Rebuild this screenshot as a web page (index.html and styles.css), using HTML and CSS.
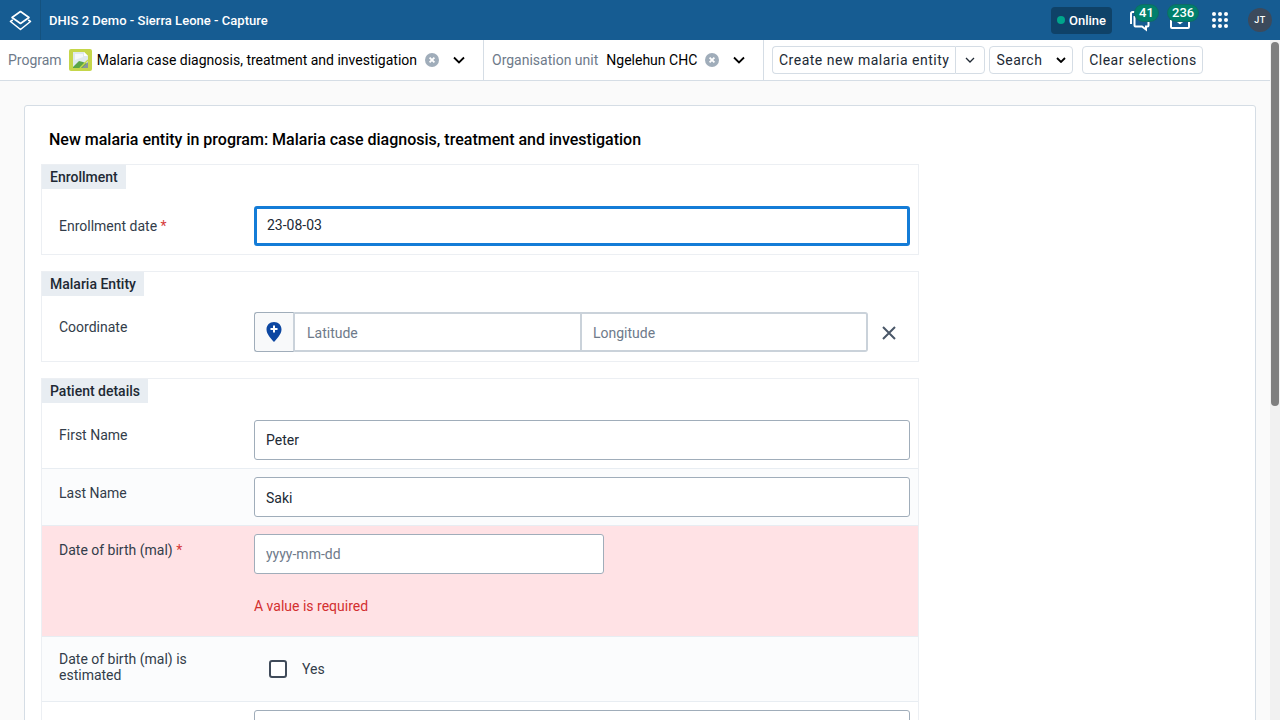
FILE: index.html
```html
<!DOCTYPE html>
<html>
<head>
    <title>DHIS 2 Demo - Sierra Leone - Capture</title>
    <link rel="stylesheet" href="styles.css">
</head>
<body>
    <header class="header-bar">
        <div class="logo-box">
            <svg width="23" height="21" viewBox="0 0 23 21" fill="none" stroke="#fff" stroke-width="1.6" stroke-linejoin="round">
                <path d="M11.500 1.500L20 7.500 11.500 13.500 3 7.500Z"/>
                <path d="M3.800 10L1.500 11.500 11.500 19.500 21.500 11.500 19.200 10"/>
            </svg>
        </div>
        <span class="app-title">DHIS 2 Demo - Sierra Leone - Capture</span>
        <div class="header-right">
            <div class="online-pill"><span class="online-dot"></span>Online</div>
            <div class="header-icon icon-messages">
                <svg width="24" height="24" viewBox="0 0 24 24" fill="none" stroke="#fff" stroke-width="2">
                    <path d="M10 4H4.500A1.500 1.500 0 0 0 3 5.500V16"/>
                    <path d="M6.500 8v9.500a1 1 0 0 0 1 1H14l4 3v-3h1.500a1 1 0 0 0 1-1V14"/>
                </svg>
                <span class="count-badge badge-messages">41</span>
            </div>
            <div class="header-icon icon-inbox">
                <svg width="24" height="24" viewBox="0 0 24 24" fill="none" stroke="#fff" stroke-width="2">
                    <path d="M3 6v13a1 1 0 0 0 1 1h16a1 1 0 0 0 1-1V6"/>
                    <path d="M9 13.500h6l-3 2.500z" fill="#fff" stroke-width="1"/>
                </svg>
                <span class="count-badge badge-inbox">236</span>
            </div>
            <div class="apps-grid">
                <span></span><span></span><span></span>
                <span></span><span></span><span></span>
                <span></span><span></span><span></span>
            </div>
            <div class="avatar">JT</div>
        </div>
    </header>

    <div class="selection-bar">
        <div class="selector selector-program">
            <span class="selector-label">Program</span>
            <svg class="program-icon" width="23" height="22" viewBox="0 0 23 22">
                <rect width="23" height="22" rx="2" fill="#c5d64a"/>
                <path d="M4 3h11l4 4v12H4z" fill="#dfe9ee"/>
                <path d="M6 5h8v3l-8 3z" fill="#f4f8fa"/>
                <path d="M4 18l6-6 4 1 5 2v4H4z" fill="#5aa646"/>
                <path d="M15 3v4h4z" fill="#fff"/>
                <path d="M13 19l6-6v6z" fill="#8a949e"/>
                <path d="M11 19l8-8" stroke="#c5d64a" stroke-width="1.500"/>
            </svg>
            <span class="selector-value">Malaria case diagnosis, treatment and investigation</span>
            <svg class="clear-icon" width="14" height="14" viewBox="0 0 14 14">
                <circle cx="7" cy="7" r="7" fill="#a0adba"/>
                <path d="M4.600 4.600l4.800 4.800M9.400 4.600l-4.800 4.800" stroke="#fff" stroke-width="1.800"/>
            </svg>
            <svg class="chevron" width="12" height="8" viewBox="0 0 12 8" fill="none" stroke="#000" stroke-width="1.800">
                <path d="M1 1.500l5 5 5-5"/>
            </svg>
        </div>
        <div class="selector selector-orgunit">
            <span class="selector-label">Organisation unit</span>
            <span class="selector-value">Ngelehun CHC</span>
            <svg class="clear-icon" width="14" height="14" viewBox="0 0 14 14">
                <circle cx="7" cy="7" r="7" fill="#a0adba"/>
                <path d="M4.600 4.600l4.800 4.800M9.400 4.600l-4.800 4.800" stroke="#fff" stroke-width="1.800"/>
            </svg>
            <svg class="chevron" width="12" height="8" viewBox="0 0 12 8" fill="none" stroke="#000" stroke-width="1.800">
                <path d="M1 1.500l5 5 5-5"/>
            </svg>
        </div>
        <div class="action-buttons">
            <div class="split-button">
                <button class="btn btn-main">Create new malaria entity</button>
                <button class="btn btn-arrow">
                    <svg width="10" height="6" viewBox="0 0 10 6" fill="none" stroke="#212934" stroke-width="1.300"><path d="M1 1l4 4 4-4"/></svg>
                </button>
            </div>
            <button class="btn btn-search">Search
                <svg width="10" height="6" viewBox="0 0 10 6" fill="none" stroke="#000" stroke-width="1.800"><path d="M1 1l4 4 4-4"/></svg>
            </button>
            <button class="btn btn-clear">Clear selections</button>
        </div>
    </div>

    <main class="page-body">
        <div class="form-card">
            <h1 class="form-title">New malaria entity in program: Malaria case diagnosis, treatment and investigation</h1>

            <section class="form-section">
                <div class="section-tab">Enrollment</div>
                <div class="field-row row-enrollment">
                    <label class="field-label">Enrollment date <span class="req">*</span></label>
                    <div class="field-input">
                        <input class="text-input input-focus" type="text" value="23-08-03">
                    </div>
                </div>
            </section>

            <section class="form-section">
                <div class="section-tab">Malaria Entity</div>
                <div class="field-row row-coordinate">
                    <label class="field-label">Coordinate</label>
                    <div class="coord-group">
                        <button class="pin-button">
                            <svg width="16" height="20" viewBox="0 0 16 20">
                                <path d="M8 0C3.600 0 .500 3.200 .500 7.400 .500 12 5 16.500 8 20c3-3.500 7.500-8 7.500-12.600C15.500 3.200 12.400 0 8 0z" fill="#0d47a1"/>
                                <path d="M8 3.500v7M4.500 7h7" stroke="#fff" stroke-width="2"/>
                            </svg>
                        </button>
                        <input class="coord-input" type="text" placeholder="Latitude">
                        <input class="coord-input coord-last" type="text" placeholder="Longitude">
                        <svg class="coord-clear" width="16" height="16" viewBox="0 0 16 16" fill="none" stroke="#4a5768" stroke-width="2">
                            <path d="M2 2l12 12M14 2L2 14"/>
                        </svg>
                    </div>
                </div>
            </section>

            <section class="form-section">
                <div class="section-tab">Patient details</div>
                <div class="field-row row-first">
                    <label class="field-label">First Name</label>
                    <div class="field-input"><input class="text-input" type="text" value="Peter"></div>
                </div>
                <div class="field-row row-last">
                    <label class="field-label">Last Name</label>
                    <div class="field-input"><input class="text-input" type="text" value="Saki"></div>
                </div>
                <div class="field-row row-error">
                    <label class="field-label">Date of birth (mal) <span class="req">*</span></label>
                    <div class="field-input">
                        <input class="text-input input-date" type="text" placeholder="yyyy-mm-dd">
                        <div class="error-text">A value is required</div>
                    </div>
                </div>
                <div class="field-row row-estimated">
                    <label class="field-label">Date of birth (mal) is estimated</label>
                    <div class="check-wrap">
                        <span class="checkbox"></span>
                        <span class="check-text">Yes</span>
                    </div>
                </div>
                <div class="field-row row-next">
                    <label class="field-label"></label>
                    <div class="field-input"><input class="text-input" type="text"></div>
                </div>
            </section>
        </div>
    </main>
</body>
</html>
```

FILE: styles.css
```css
/* Capture app layout */
html,
body {
    margin: 0;
    height: 100%;
    overflow: hidden;
}

body {
    display: flex;
    flex-direction: column;
    font-family: 'Roboto', sans-serif;
    font-size: 14px;
    color: #212934;
    background-color: #FAFAFA;
    padding-right: 10px;
    box-sizing: border-box;
    position: relative;
}

/* Page scrollbar */
body::before {
    content: "";
    position: absolute;
    top: 40px;
    right: 0;
    width: 10px;
    height: 680px;
    background-color: #F1F1F1;
}

body::after {
    content: "";
    position: absolute;
    top: 42px;
    right: 1px;
    width: 8px;
    height: 364px;
    border-radius: 4px;
    background-color: #7F7F7F;
}

/* Header */
.header-bar {
    display: flex;
    flex: none;
    align-items: center;
    height: 40px;
    margin-right: -10px;
    background-color: #165C92;
    color: #FFFFFF;
}

.logo-box {
    display: flex;
    align-items: center;
    justify-content: center;
    width: 41px;
    height: 40px;
    border-right: 1px solid #14527F;
    box-sizing: border-box;
}

.app-title {
    margin-left: 8px;
    font-size: 13px;
    font-weight: 500;
    letter-spacing: 0.03px;
}

.header-right {
    display: flex;
    align-items: center;
    margin-left: auto;
    height: 40px;
}

.online-pill {
    display: flex;
    align-items: center;
    height: 27px;
    padding: 0 6px;
    border-radius: 4px;
    background-color: #0F4268;
    font-size: 13px;
    font-weight: 500;
}

.online-dot {
    width: 8px;
    height: 8px;
    margin-right: 4px;
    border-radius: 50%;
    background-color: #00A58B;
}

.header-icon {
    position: relative;
    width: 24px;
    height: 24px;
}

.icon-messages {
    margin-left: 16px;
}

.icon-inbox {
    margin-left: 16px;
}

.count-badge {
    position: absolute;
    top: -3px;
    display: block;
    height: 16px;
    line-height: 16px;
    padding: 0 4px;
    border-radius: 8px;
    background-color: #00806C;
    box-shadow: 0 0 0 1px #0F6B66;
    font-size: 13px;
    font-weight: 500;
}

.badge-messages {
    left: 7px;
}

.badge-inbox {
    left: 0;
}

.apps-grid {
    display: grid;
    grid-template-columns: repeat(3, 4px);
    gap: 2px;
    margin-left: 20px;
}

.apps-grid span {
    width: 4px;
    height: 4px;
    border-radius: 50%;
    background-color: #FFFFFF;
}

.avatar {
    width: 24px;
    height: 24px;
    margin: 0 8px 0 20px;
    line-height: 24px;
    text-align: center;
    border-radius: 50%;
    background-color: #3C4A5C;
    font-size: 9px;
    font-weight: 500;
    letter-spacing: 0.5px;
}

/* Selection bar */
.selection-bar {
    display: flex;
    flex: none;
    height: 41px;
    box-sizing: border-box;
    border-bottom: 1px solid #D5DDE5;
    background-color: #FFFFFF;
}

.selector {
    display: flex;
    align-items: center;
    box-sizing: border-box;
    height: 40px;
    padding-left: 8px;
    border-right: 1px solid #D5DDE5;
}

.selector-program {
    width: 484px;
}

.selector-orgunit {
    width: 280px;
}

.selector-label {
    color: #6E7A8A;
}

.selector-value {
    color: #000000;
}

.program-icon {
    margin: 0 5px 0 7px;
}

.selector-orgunit .selector-value {
    margin-left: 8px;
}

.clear-icon {
    margin-left: 8px;
}

.chevron {
    margin-left: 14px;
}

.action-buttons {
    display: flex;
    align-items: center;
    padding-left: 8px;
}

.btn {
    height: 28px;
    box-sizing: border-box;
    border: 1px solid #D5DDE5;
    border-radius: 4px;
    background-color: #FFFFFF;
    color: #212934;
    font-family: 'Roboto', sans-serif;
    font-size: 14px;
    letter-spacing: 0.5px;
    padding: 0 6px;
}

.split-button {
    display: flex;
}

.btn-main {
    border-right: none;
    border-radius: 4px 0 0 4px;
}

.btn-arrow {
    display: flex;
    align-items: center;
    justify-content: center;
    width: 30px;
    border-radius: 0 4px 4px 0;
}

.btn-search {
    display: flex;
    align-items: center;
    justify-content: space-between;
    width: 84px;
    margin-left: 4px;
}

.btn-clear {
    width: 121px;
    margin-left: 9px;
    padding: 0;
}

/* Form */
.page-body {
    flex: 1;
    min-height: 0;
    overflow: hidden;
    padding: 24px 14px 0 24px;
}

.form-card {
    box-sizing: border-box;
    height: 800px;
    padding: 0 16px;
    border: 1px solid #D5DDE5;
    border-radius: 3px;
    background-color: #FFFFFF;
}

.form-title {
    margin: 24px 0 14px 8px;
    font-size: 16px;
    line-height: 20px;
    font-weight: 500;
    color: #000000;
}

.form-section {
    width: 878px;
    box-sizing: border-box;
    margin-bottom: 16px;
    border: 1px solid #ECEFF3;
}

.section-tab {
    display: table;
    height: 24px;
    line-height: 24px;
    padding: 0 8px;
    background-color: #E8EDF2;
    font-weight: 500;
}

.field-row {
    display: flex;
    box-sizing: border-box;
    padding: 0 8px 0 17px;
    border-bottom: 1px solid #E8EDF2;
}

.field-label {
    flex: none;
    box-sizing: border-box;
    width: 195px;
    padding: 8px 16px 0 0;
    line-height: 16px;
    color: #333D4A;
}

.field-input {
    flex: 1;
}

.req {
    color: #D63A3A;
}

.text-input {
    display: block;
    box-sizing: border-box;
    width: 100%;
    height: 40px;
    padding: 0 11px;
    border: 1px solid #A0ADBA;
    border-radius: 3px;
    background-color: #FFFFFF;
    color: #212934;
    font-family: 'Roboto', sans-serif;
    font-size: 14px;
}

.text-input::placeholder,
.coord-input::placeholder {
    color: #6E7A8A;
    opacity: 1;
}

.input-focus {
    border: 3px solid #147CD7;
    padding: 0 10px 2px;
}

.input-date {
    width: 350px;
}

.row-enrollment {
    height: 65px;
    padding-top: 17px;
    border-bottom: none;
}

.row-enrollment .field-label {
    padding-top: 12px;
}

.row-coordinate {
    height: 65px;
    padding-top: 16px;
    border-bottom: none;
}

.row-coordinate .field-label {
    padding-top: 7px;
}

.coord-group {
    display: flex;
    align-items: flex-start;
}

.pin-button {
    display: flex;
    align-items: center;
    justify-content: center;
    box-sizing: border-box;
    width: 41px;
    height: 40px;
    padding: 0;
    border: 1px solid #A0ADBA;
    border-right: 2px solid #CAD2DA;
    border-radius: 3px 0 0 3px;
    background-color: #F8F9FA;
}

.coord-input {
    box-sizing: border-box;
    width: 287px;
    height: 40px;
    padding: 2px 12px 0;
    border: 2px solid #CAD2DA;
    border-left: none;
    background-color: #FFFFFF;
    font-family: 'Roboto', sans-serif;
    font-size: 14px;
}

.coord-last {
    width: 286px;
    padding: 2px 11px 0;
    border-radius: 0 3px 3px 0;
}

.coord-clear {
    margin: 13px 0 0 13px;
}

.row-first {
    height: 66px;
    padding-top: 17px;
}

.row-first .field-label {
    padding-top: 7px;
}

.row-last {
    height: 57px;
    padding-top: 8px;
    background-color: #FBFCFD;
}

.row-last .text-input {
    padding-top: 2px;
}

.row-error {
    height: 111px;
    padding-top: 8px;
    background-color: #FFE2E5;
}

.error-text {
    margin-top: 24px;
    line-height: 16px;
    color: #D32F2F;
}

.row-estimated {
    height: 65px;
    align-items: center;
    background-color: #FBFCFD;
}

.row-estimated .field-label {
    padding: 0 16px 4px 0;
}

.check-wrap {
    display: flex;
    align-items: center;
    margin-left: 15px;
}

.checkbox {
    box-sizing: border-box;
    width: 18px;
    height: 18px;
    border: 2px solid #404B5A;
    border-radius: 3px;
    background-color: #FFFFFF;
}

.check-text {
    margin-left: 15px;
    color: #333D4A;
}

.row-next {
    height: 60px;
    padding-top: 8px;
}
```
